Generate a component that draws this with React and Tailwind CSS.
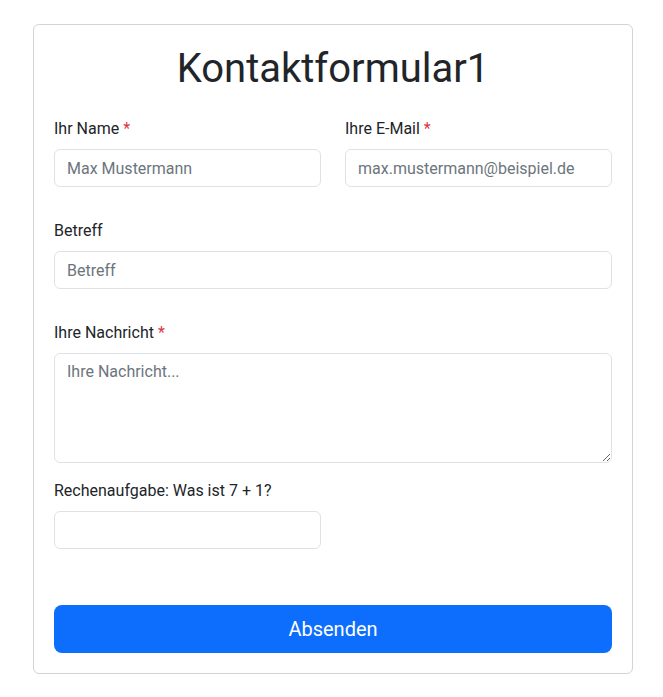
import React, { useState } from 'react';

const inputClass =
    'block w-full h-[38px] px-3 rounded-[6px] border border-[#dee2e6] bg-white text-[16px] text-[#212529] placeholder:text-[#6c757d] outline-none';

function Label({ children, required }) {
    return (
        <label className="block mb-2 text-[16px] leading-6 text-[#212529]">
            {children}
            {required && <span className="text-[#dc3545]"> *</span>}
        </label>
    );
}

export default function App() {
    const [form, setForm] = useState({ name: '', email: '', subject: '', message: '', captcha: '' });

    const handleChange = (e) => {
        setForm({ ...form, [e.target.name]: e.target.value });
    };

    return (
        <div className="min-h-screen bg-white pt-6 pl-[33px] font-['Segoe_UI',Roboto,'Liberation_Sans',sans-serif]">
            <div className="w-[600px] border border-[#d3d3d3] rounded-[6px] p-5">
                <h1 className="text-center text-[40px] leading-[48px] text-[#212529] mb-6">Kontaktformular1</h1>

                <form onSubmit={(e) => e.preventDefault()}>
                    {/* Name + E-Mail */}
                    <div className="grid grid-cols-2 gap-6">
                        <div>
                            <Label required>Ihr Name</Label>
                            <input
                                name="name"
                                value={form.name}
                                onChange={handleChange}
                                className={inputClass}
                                placeholder="Max Mustermann"
                            />
                        </div>
                        <div>
                            <Label required>Ihre E-Mail</Label>
                            <input
                                type="email"
                                name="email"
                                value={form.email}
                                onChange={handleChange}
                                className={inputClass}
                                placeholder="max.mustermann@beispiel.de"
                            />
                        </div>
                    </div>

                    <div className="mt-8">
                        <Label>Betreff</Label>
                        <input
                            name="subject"
                            value={form.subject}
                            onChange={handleChange}
                            className={inputClass}
                            placeholder="Betreff"
                        />
                    </div>

                    <div className="mt-8">
                        <Label required>Ihre Nachricht</Label>
                        <textarea
                            name="message"
                            rows={4}
                            value={form.message}
                            onChange={handleChange}
                            className="block w-full h-[110px] px-3 py-[6px] rounded-[6px] border border-[#dee2e6] bg-white text-[16px] leading-6 text-[#212529] placeholder:text-[#6c757d] outline-none resize-y"
                            placeholder="Ihre Nachricht..."
                        />
                    </div>

                    <div className="mt-4 grid grid-cols-2 gap-6">
                        <div>
                            <Label>Rechenaufgabe: Was ist 7 + 1?</Label>
                            <input
                                name="captcha"
                                value={form.captcha}
                                onChange={handleChange}
                                className={inputClass}
                            />
                        </div>
                    </div>

                    <button
                        type="submit"
                        className="mt-14 block w-full h-[48px] rounded-[8px] bg-[#0d6efd] text-white text-[20px] leading-[48px]"
                    >
                        Absenden
                    </button>
                </form>
            </div>
        </div>
    );
}
